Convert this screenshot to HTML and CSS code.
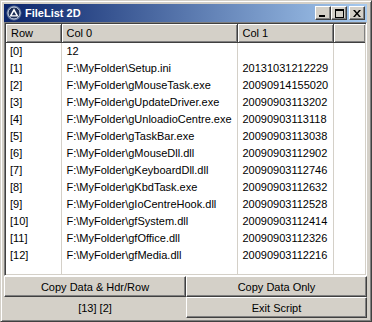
FILE: index.html
```html
<!DOCTYPE html>
<html lang="en">
<head>
  <meta charset="UTF-8"/>
  <title>FileList 2D</title>
  <link rel="stylesheet" href="styles.css">
</head>
<body>
  <div class="window">
    <div class="titlebar">
      <svg class="app-icon" width="16" height="16" viewBox="0 0 16 16">
        <circle cx="8" cy="8" r="7.5" fill="#5b6f94"/>
        <circle cx="8" cy="8" r="6" fill="#1d2f57" stroke="#c8d2e6" stroke-width="1"/>
        <path d="M8 3.2 L12.6 11.4 L3.4 11.4 Z" fill="#ffffff"/>
        <path d="M8 6.4 L10.2 10.2 L5.8 10.2 Z" fill="#1d2f57"/>
      </svg>
      <span class="title">FileList 2D</span>
      <div class="caption-buttons">
        <span class="cap-btn"><svg width="8" height="7" viewBox="0 0 8 7"><rect x="0" y="5" width="6" height="2" fill="#000"/></svg></span>
        <span class="cap-btn"><svg width="9" height="9" viewBox="0 0 9 9"><rect x="0.5" y="0.5" width="8" height="8" fill="none" stroke="#000"/><rect x="0" y="0" width="9" height="2" fill="#000"/></svg></span>
        <span class="cap-btn close"><svg width="8" height="7" viewBox="0 0 8 7"><path d="M0 0h2l2 2.5 2-2.5h2l-3 3.5 3 3.5h-2l-2-2.5-2 2.5h-2l3-3.5z" fill="#000"/></svg></span>
      </div>
    </div>

    <div class="listview">
      <table class="grid">
        <thead>
          <tr><th class="c-row">Row</th><th class="c-0">Col 0</th><th class="c-1">Col 1</th><th class="c-fill"></th></tr>
        </thead>
        <tbody>
          <tr><td>[0]</td><td>12</td><td></td><td></td></tr>
          <tr><td>[1]</td><td>F:\MyFolder\Setup.ini</td><td>20131031212229</td><td></td></tr>
          <tr><td>[2]</td><td>F:\MyFolder\gMouseTask.exe</td><td>20090914155020</td><td></td></tr>
          <tr><td>[3]</td><td>F:\MyFolder\gUpdateDriver.exe</td><td>20090903113202</td><td></td></tr>
          <tr><td>[4]</td><td>F:\MyFolder\gUnloadioCentre.exe</td><td>20090903113118</td><td></td></tr>
          <tr><td>[5]</td><td>F:\MyFolder\gTaskBar.exe</td><td>20090903113038</td><td></td></tr>
          <tr><td>[6]</td><td>F:\MyFolder\gMouseDll.dll</td><td>20090903112902</td><td></td></tr>
          <tr><td>[7]</td><td>F:\MyFolder\gKeyboardDll.dll</td><td>20090903112746</td><td></td></tr>
          <tr><td>[8]</td><td>F:\MyFolder\gKbdTask.exe</td><td>20090903112632</td><td></td></tr>
          <tr><td>[9]</td><td>F:\MyFolder\gIoCentreHook.dll</td><td>20090903112528</td><td></td></tr>
          <tr><td>[10]</td><td>F:\MyFolder\gfSystem.dll</td><td>20090903112414</td><td></td></tr>
          <tr><td>[11]</td><td>F:\MyFolder\gfOffice.dll</td><td>20090903112326</td><td></td></tr>
          <tr><td>[12]</td><td>F:\MyFolder\gfMedia.dll</td><td>20090903112216</td><td></td></tr>
          <tr class="filler"><td></td><td></td><td></td><td></td></tr>
        </tbody>
      </table>
    </div>

    <div class="actions">
      <button class="btn">Copy Data &amp; Hdr/Row</button>
      <button class="btn">Copy Data Only</button>
      <span class="status">[13] [2]</span>
      <button class="btn">Exit Script</button>
    </div>
  </div>
</body>
</html>
```

FILE: styles.css
```css
body { margin:0; font-family:"Liberation Sans", Arial, sans-serif; font-size:11px; color:#000; }
.window { width:372px; height:322px; box-sizing:border-box; background:#d4d0c8; border:1px solid; border-color:#d4d0c8 #404040 #404040 #d4d0c8; box-shadow:inset 1px 1px #fff, inset -1px -1px #808080; padding:3px 4px 3px 3px; display:flex; flex-direction:column; }

.titlebar { height:18px; flex:none; display:flex; align-items:center; background:linear-gradient(to right, #0a246a, #a6caf0); color:#fff; }
.app-icon { margin:0 3px 0 2px; flex:none; }
.title { font-weight:bold; font-size:11px; }
.caption-buttons { margin-left:auto; display:flex; margin-right:2px; }
.cap-btn { width:16px; height:14px; box-sizing:border-box; background:#d4d0c8; display:flex; align-items:center; justify-content:center; border:1px solid; border-color:#fff #404040 #404040 #fff; box-shadow:inset -1px -1px #808080; }
.cap-btn.close { margin-left:2px; }

.listview { flex:1; min-height:0; background:#fff; border:1px solid; border-color:#808080 #fff #fff #808080; box-shadow:inset 1px 1px #404040, inset -1px -1px #d4d0c8; padding:1px; overflow:hidden; display:flex; }
.grid { border-collapse:collapse; table-layout:fixed; width:100%; height:100%; }
.grid th { height:18px; box-sizing:border-box; background:#d4d0c8; font-weight:normal; text-align:left; padding:0 0 0 5px; border-right:1px solid #404040; border-bottom:1px solid #404040; box-shadow:inset 1px 1px #fff, inset -1px -1px #808080; white-space:nowrap; }
.grid th.c-fill { border-right:none; }
.c-row { width:55px; }
.c-0 { width:176px; }
.c-1 { width:96px; }
.grid td { height:17px; padding:0 0 0 5px; border-right:1px solid #d4d0c8; white-space:nowrap; overflow:hidden; }
.grid td:first-child { padding-left:4px; }
.grid td:last-child { border-right:none; }
.grid tr.filler td { height:auto; }

.actions { flex:none; display:grid; grid-template-columns:182px 181px; grid-template-rows:21px 21px; }
.btn { font:inherit; color:#000; background:#d4d0c8; margin:0; padding:0; border:1px solid; border-color:#fff #404040 #404040 #fff; box-shadow:inset -1px -1px #808080; }
.status { display:flex; align-items:center; justify-content:center; }
```
